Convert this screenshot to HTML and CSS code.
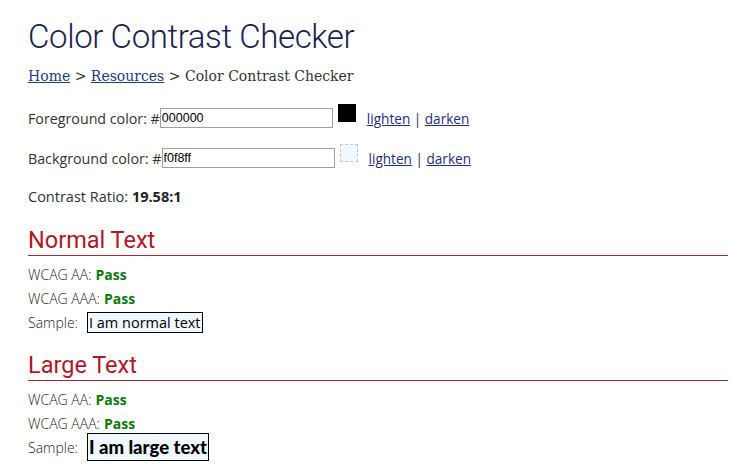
FILE: index.html
```html
<!DOCTYPE html>
<html lang="en">
<head>
<meta charset="utf-8">
<title>Color Contrast Checker</title>
<link rel="stylesheet" href="styles.css">
</head>
<body>
<main class="page">
  <h1 class="title">Color Contrast Checker</h1>
  <nav class="crumbs"><a href="#">Home</a> &gt; <a href="#">Resources</a> &gt; Color Contrast Checker</nav>

  <div class="row">
    <label class="label">Foreground color: #</label><input class="hex" type="text" value="000000"><span class="swatch swatch-fg"></span>
    <span class="tools"><a href="#">lighten</a> | <a href="#">darken</a></span>
  </div>
  <div class="row">
    <label class="label">Background color: #</label><input class="hex" type="text" value="f0f8ff"><span class="swatch swatch-bg"></span>
    <span class="tools"><a href="#">lighten</a> | <a href="#">darken</a></span>
  </div>
  <p class="ratio">Contrast Ratio: <strong>19.58:1</strong></p>

  <section class="block">
    <h2 class="heading">Normal Text</h2>
    <div class="line"><span>WCAG AA:</span><b class="pass">Pass</b></div>
    <div class="line"><span>WCAG AAA:</span><b class="pass">Pass</b></div>
    <div class="line"><span class="sample-label">Sample:</span><span class="sample">I am normal text</span></div>
  </section>

  <section class="block">
    <h2 class="heading">Large Text</h2>
    <div class="line"><span>WCAG AA:</span><b class="pass">Pass</b></div>
    <div class="line"><span>WCAG AAA:</span><b class="pass">Pass</b></div>
    <div class="line"><span class="sample-label">Sample:</span><span class="sample sample-large">I am large text</span></div>
  </section>
</main>
</body>
</html>
```

FILE: styles.css
```css
html, body {
  margin: 0;
  padding: 0;
  background: #fff;
}
body {
  font-family: "Open Sans", sans-serif;
  font-size: 14px;
  color: #333;
}
.page {
  padding: 17px 4px 0 28px;
}
.title {
  font-family: Roboto, sans-serif;
  font-weight: 300;
  font-size: 33px;
  letter-spacing: -0.4px;
  line-height: 40px;
  color: #1c1f4f;
  margin: 0 0 9px 0;
}
.crumbs {
  font-family: "DejaVu Serif", serif;
  font-size: 14px;
  line-height: 20px;
  color: #333;
  margin-bottom: 22px;
}
.crumbs a {
  color: #1f3a7a;
}
.row {
  display: flex;
  align-items: center;
  height: 20px;
  margin-bottom: 20px;
  font-size: 14.25px;
}
.label {
  white-space: pre;
}
.hex {
  box-sizing: border-box;
  width: 173px;
  height: 20px;
  margin: 0;
  padding: 1px 1px;
  border: 1px solid #a0a0a0;
  font-family: "Liberation Sans", Arial, sans-serif;
  font-size: 12.5px;
  color: #000;
}
.swatch {
  box-sizing: border-box;
  width: 18px;
  height: 18px;
  margin: -10px 0 0 5px;
  border: 1px dashed #000;
}
.swatch-fg {
  background: #000;
}
.swatch-bg {
  background: #f0f8ff;
  border-color: #c8c8c8;
}
.tools {
  margin-left: 11px;
  font-size: 13.6px;
  color: #333;
}
.tools a {
  color: #1f2f80;
}
.ratio {
  margin: -1px 0 19px 0;
  line-height: 20px;
  font-size: 14.5px;
}
.ratio strong {
  font-weight: 700;
  color: #222;
}
.heading {
  font-family: Roboto, sans-serif;
  font-weight: 400;
  font-size: 23.5px;
  line-height: 28px;
  color: #b0182a;
  margin: 0 0 6px 0;
  padding-bottom: 1px;
  border-bottom: 1px solid #a52a35;
}
.block {
  margin-bottom: 17px;
}
.line {
  display: flex;
  align-items: center;
  gap: 4px;
  height: 24px;
  font-weight: 300;
  color: #222;
}
.sample-label {
  margin-right: 5px;
}
.pass {
  color: #0a7a0a;
  font-weight: 700;
}
.sample {
  display: inline-block;
  background: #f0f8ff;
  border: 1px solid #000;
  color: #000;
  font-weight: 400;
  font-size: 14.5px;
  line-height: 19px;
  padding: 0 1px;
}
.sample-large {
  font-family: Lato, sans-serif;
  font-weight: 900;
  font-size: 18.5px;
  line-height: 26px;
}
```
